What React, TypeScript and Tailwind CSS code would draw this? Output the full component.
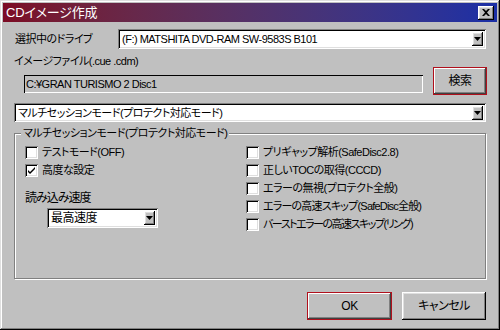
import React from 'react';

const raised =
  'bg-[#c0c0c0] shadow-[inset_-1px_-1px_#000,inset_1px_1px_#fff,inset_-2px_-2px_#808080,inset_2px_2px_#dfdfdf]';
const sunken =
  'shadow-[inset_1px_1px_#808080,inset_-1px_-1px_#fff,inset_2px_2px_#000,inset_-2px_-2px_#dfdfdf]';

const Arrow = () => (
  <svg width="7" height="4" viewBox="0 0 7 4">
    <path d="M0 0h7L3.5 4z" fill="#000" />
  </svg>
);

const Combo = ({ text, className = '' }: { text: string; className?: string }) => (
  <div className={`flex items-center bg-white ${sunken} pl-[4px] pr-[3px] ${className}`}>
    <span className="flex-1 whitespace-nowrap leading-[14px]">{text}</span>
    <div className={`${raised} w-[11px] h-[14px] flex items-center justify-center`}>
      <Arrow />
    </div>
  </div>
);

const Check = ({ label, checked = false, className = '' }: { label: string; checked?: boolean; className?: string }) => (
  <div className="flex items-center h-[18px]">
    <div className={`w-[13px] h-[13px] bg-white ${sunken} flex items-center justify-center`}>
      {checked && (
        <svg width="9" height="9" viewBox="0 0 9 9">
          <path d="M1 4l2 2 5-5v2l-5 5-2-2z" fill="#000" />
        </svg>
      )}
    </div>
    <span className={`ml-[4px] leading-[14px] ${className}`}>{label}</span>
  </div>
);

const Button = ({ label, focus = false, className = '' }: { label: string; focus?: boolean; className?: string }) => (
  <div
    className={`flex items-center justify-center text-[12px] ${className} ${
      focus
        ? 'bg-[#c0c0c0] border border-[#b0101c] shadow-[inset_-1px_-1px_#404040,inset_1px_1px_#fff,inset_-2px_-2px_#808080]'
        : raised
    }`}
  >
    {label}
  </div>
);

export default function App() {
  return (
    <div
      className="w-[500px] h-[330px] bg-[#c0c0c0] p-[3px] flex flex-col text-[11px] tracking-[-0.5px] text-black shadow-[inset_-1px_-1px_#000,inset_1px_1px_#dfdfdf,inset_-2px_-2px_#808080,inset_2px_2px_#fff]"
      style={{ fontFamily: '"Liberation Sans", "Noto Sans CJK JP", sans-serif', fontFeatureSettings: '"palt"' }}
    >
      {/* title bar */}
      <div className="h-[19px] flex items-center bg-gradient-to-r from-[#7c0a24] to-[#1a2fa6] pl-[3px] pr-[3px]">
        <span className="text-white text-[13px] tracking-[-0.2px] leading-[16px] flex-1">CDイメージ作成</span>
        <div className={`${raised} w-[16px] h-[14px] flex items-center justify-center`}>
          <svg width="8" height="7" viewBox="0 0 8 7">
            <path d="M0 0h2l2 2 2-2h2L5 3.5 8 7H6L4 5 2 7H0l3-3.5z" fill="#000" />
          </svg>
        </div>
      </div>

      <div className="flex flex-col px-[11px] pt-[7px]">
        {/* drive */}
        <div className="flex items-center h-[20px]">
          <span className="w-[104px] leading-[14px] pl-[1px]">選択中のドライブ</span>
          <Combo text="(F:) MATSHITA DVD-RAM SW-9583S B101" className="flex-1 h-[20px]" />
        </div>

        {/* image file */}
        <div className="flex mt-[5px]">
          <div className="flex flex-col flex-1">
            <span className="h-[14px] leading-[14px]">イメージファイル(.cue .cdm)</span>
            <div className="ml-[10px] mt-[7px] w-[399px] h-[18px] flex items-center pl-[2px] shadow-[inset_1px_1px_#000,inset_-1px_-1px_#fff]">
              <span className="leading-[14px]">C:¥GRAN TURISMO 2 Disc1</span>
            </div>
          </div>
          <Button label="検索" focus className="w-[54px] h-[28px] mt-[13px] mr-[-1px]" />
        </div>

        <Combo text="マルチセッションモード(プロテクト対応モード)" className="mt-[8px] h-[19px]" />

        {/* group */}
        <div className="relative mt-[11px] h-[146px] border border-[#808080] shadow-[1px_1px_#fff,inset_1px_1px_#fff] pt-[9px] pl-[10px] flex">
          <span className="absolute left-[6px] top-[-7px] bg-[#c0c0c0] px-[2px] leading-[13px]">
            マルチセッションモード(プロテクト対応モード)
          </span>
          <div className="flex flex-col w-[221px]">
            <Check label="テストモード(OFF)" />
            <Check label="高度な設定" checked />
            <span className="mt-[12px] leading-[14px] text-[12px] tracking-[-1px]">読み込み速度</span>
            <Combo text="最高速度" className="ml-[22px] mt-[3px] w-[111px] h-[20px] text-[12px]" />
          </div>
          <div className="flex flex-col">
            <Check label="プリギャップ解析(SafeDisc2.8)" />
            <Check label="正しいTOCの取得(CCCD)" />
            <Check label="エラーの無視(プロテクト全般)" />
            <Check label="エラーの高速スキップ(SafeDisc全般)" className="tracking-[-0.8px]" />
            <Check label="バーストエラーの高速スキップ(リング)" className="tracking-[-1.5px]" />
          </div>
        </div>

        {/* buttons */}
        <div className="flex justify-end gap-[10px] mt-[13px]">
          <Button label="OK" focus className="w-[85px] h-[28px]" />
          <Button label="キャンセル" className="w-[84px] h-[28px]" />
        </div>
      </div>
    </div>
  );
}
